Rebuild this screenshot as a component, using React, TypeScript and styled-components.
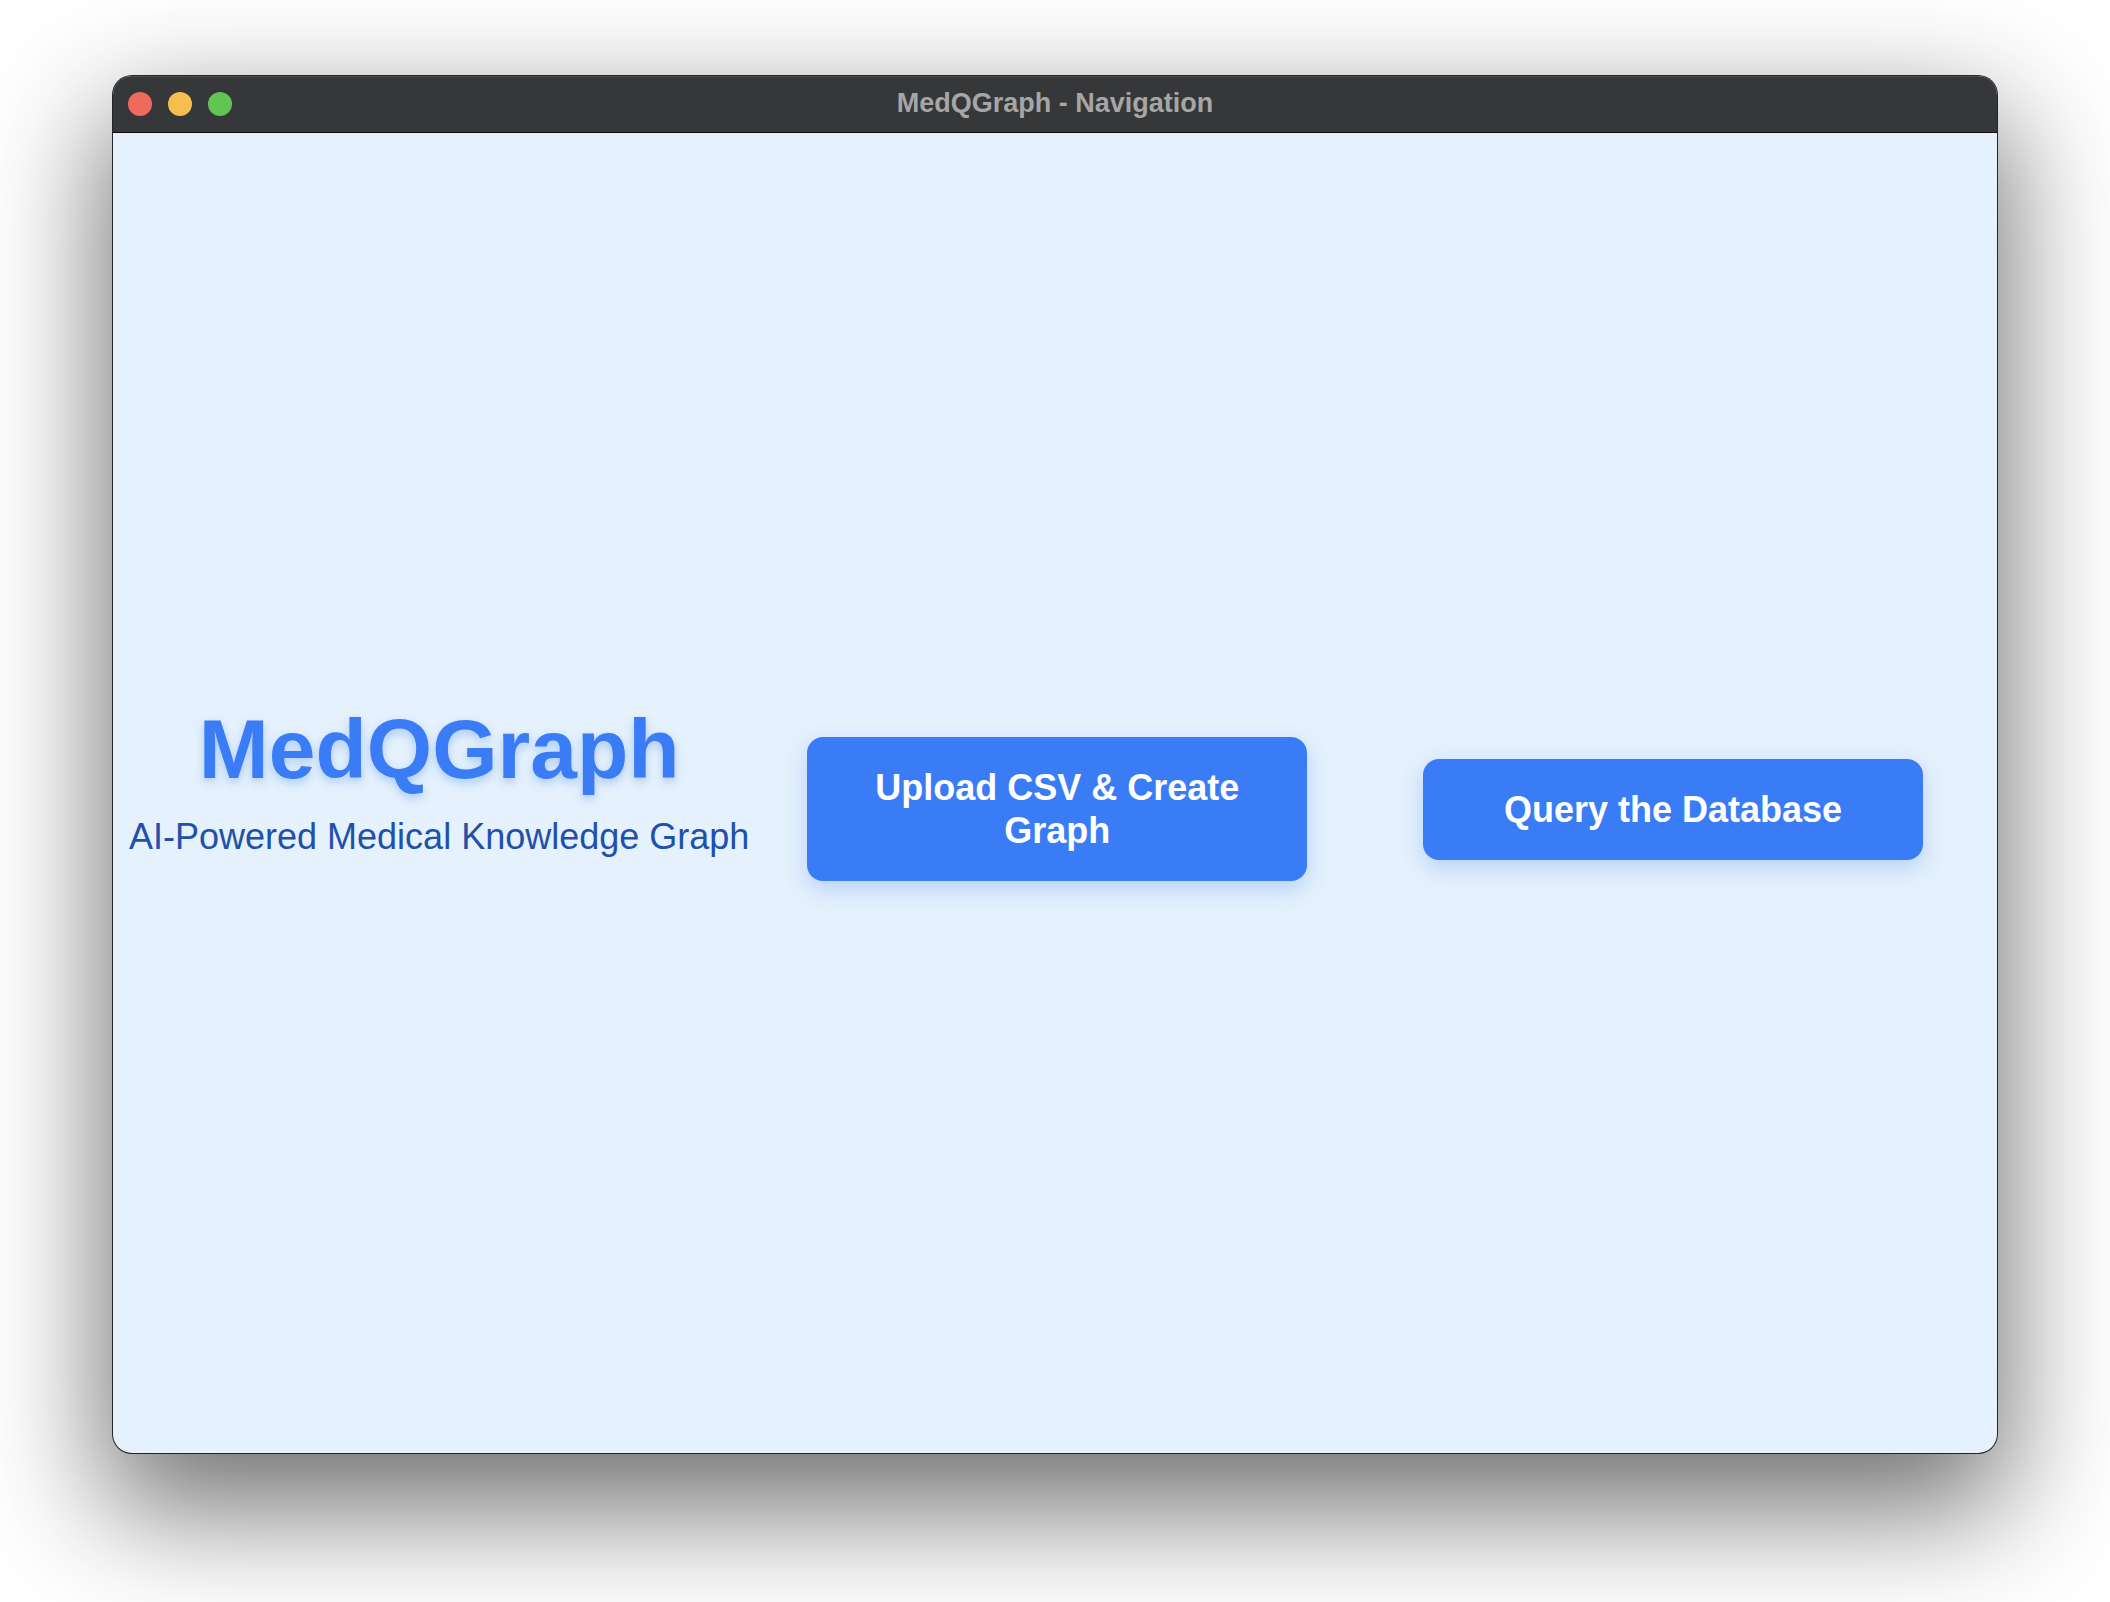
import styled, { createGlobalStyle } from 'styled-components'

const GlobalStyle = createGlobalStyle`
  html, body {
    margin: 0;
    padding: 0;
    background: #ffffff;
  }
  body {
    font-family: "Liberation Sans", Arial, Helvetica, sans-serif;
  }
  * {
    box-sizing: border-box;
  }
`

const Stage = styled.div`
  width: 2110px;
  height: 1602px;
  padding: 75px 0 0 112px;
  background: #ffffff;
  overflow: hidden;
`

const Window = styled.div`
  width: 1886px;
  height: 1379px;
  display: flex;
  flex-direction: column;
  border-radius: 20px;
  border: 1px solid rgba(0, 0, 0, 0.85);
  overflow: hidden;
  background: #e5f1fc;
  box-shadow: 0 48px 120px 8px rgba(0, 0, 0, 0.56);
`

const TitleBar = styled.div`
  height: 57px;
  flex-shrink: 0;
  display: grid;
  grid-template-columns: 1fr auto 1fr;
  align-items: center;
  padding: 0 15px 1px;
  background: #363739;
  border-bottom: 1px solid #0c0c0c;
  box-shadow: inset 0 1px 0 rgba(255, 255, 255, 0.12);
`

const Lights = styled.div`
  display: flex;
  gap: 16px;
  align-items: center;
`

const Light = styled.span<{ $color: string }>`
  width: 24px;
  height: 24px;
  border-radius: 50%;
  background: ${(p) => p.$color};
`

const WindowTitle = styled.div`
  font-family: "Liberation Sans", Arial, Helvetica, sans-serif;
  font-weight: 700;
  font-size: 27px;
  color: #a6a6a6;
  white-space: nowrap;
`

const Content = styled.main`
  flex: 1;
  display: grid;
  grid-template-columns: repeat(3, 1fr);
  align-items: center;
  justify-items: center;
  padding: 32px 16px 0;
`

const Brand = styled.div`
  text-align: center;
  padding-bottom: 60px;
`

const Heading = styled.h1`
  margin: 0 0 19px;
  font-size: 84px;
  line-height: 1.15;
  font-weight: 700;
  color: #3a7cf6;
  text-shadow: 0 4px 10px rgba(59, 130, 246, 0.35);
`

const Tagline = styled.p`
  margin: 0;
  font-size: 36px;
  line-height: 41px;
  color: #1f50aa;
  white-space: nowrap;
`

const NavButton = styled.button`
  width: 500px;
  padding: 29px 20px;
  border: none;
  border-radius: 16px;
  background: #3a7cf6;
  color: #ffffff;
  font-family: "Liberation Sans", Arial, Helvetica, sans-serif;
  font-weight: 700;
  font-size: 36px;
  line-height: 43px;
  text-align: center;
  cursor: pointer;
  box-shadow: 0 8px 22px rgba(59, 130, 246, 0.28);
`

export default function App() {
  return (
    <>
      <GlobalStyle />
      <Stage>
        <Window>
          <TitleBar>
            <Lights>
              <Light $color="#ee6a5f" />
              <Light $color="#f5bf4f" />
              <Light $color="#61c554" />
            </Lights>
            <WindowTitle>MedQGraph - Navigation</WindowTitle>
            <div />
          </TitleBar>
          <Content>
            <Brand>
              <Heading>MedQGraph</Heading>
              <Tagline>AI-Powered Medical Knowledge Graph</Tagline>
            </Brand>
            <NavButton>Upload CSV &amp; Create Graph</NavButton>
            <NavButton>Query the Database</NavButton>
          </Content>
        </Window>
      </Stage>
    </>
  )
}
